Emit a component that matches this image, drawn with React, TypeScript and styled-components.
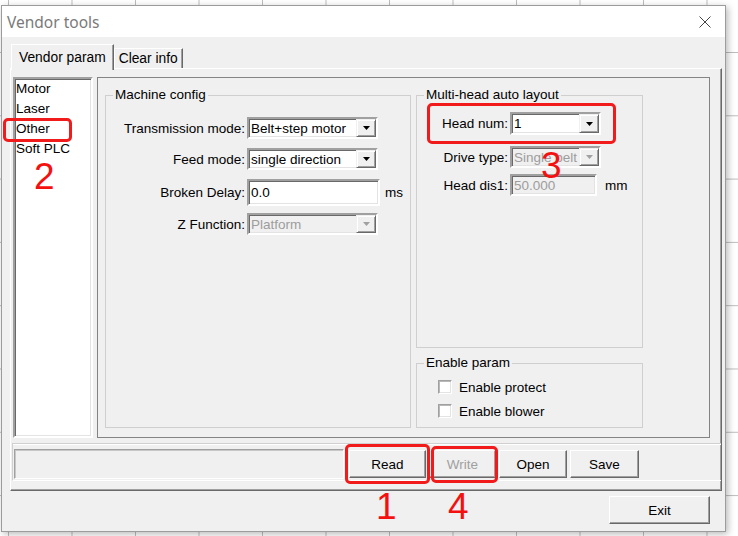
import styled, { createGlobalStyle } from 'styled-components';

const GlobalStyle = createGlobalStyle`
  html, body {
    margin: 0;
    padding: 0;
  }
  body {
    width: 738px;
    height: 536px;
    overflow: hidden;
    background-color: #fff;
    background-image: linear-gradient(to right, #bdbdbd 1px, transparent 1px),
      linear-gradient(to bottom, #bdbdbd 1px, transparent 1px);
    background-size: 63.5px 100%, 100% 63.3px;
    background-position: 8px 0, 0 52px;
    font-family: 'Liberation Sans', Arial, sans-serif;
    font-size: 13.5px;
    color: #000;
  }
`;

const Page = styled.div`
  padding: 5px 0 0 1px;
`;

const Window = styled.div`
  position: relative;
  box-sizing: border-box;
  width: 725px;
  height: 527px;
  border: 1px solid #9c9c9c;
  background: #f0f0f0;
  box-shadow: 2px 2px 7px rgba(0, 0, 0, 0.28);
  display: flex;
  flex-direction: column;
`;

const TitleBar = styled.div`
  height: 31px;
  flex: none;
  background: #fff;
  display: flex;
  align-items: center;
  justify-content: space-between;
  padding: 0 14px 0 5px;
`;

const Title = styled.span`
  font-family: 'Noto Sans', 'Liberation Sans', sans-serif;
  font-size: 15.5px;
  color: #7a7a7a;
`;

const Body = styled.div`
  flex: 1;
  padding: 7px 0 0 8px;
  display: flex;
  flex-direction: column;
`;

const TabStrip = styled.div`
  height: 24px;
  display: flex;
  align-items: flex-end;
  padding-left: 1px;
`;

const Tab = styled.div<{ $active?: boolean }>`
  position: relative;
  z-index: ${(p) => (p.$active ? 1 : 0)};
  box-sizing: border-box;
  height: ${(p) => (p.$active ? 26 : 20)}px;
  margin-bottom: ${(p) => (p.$active ? -2 : 0)}px;
  padding: 0 ${(p) => (p.$active ? 7 : 4)}px;
  display: flex;
  align-items: center;
  background: #f0f0f0;
  border-top: 1px solid #fff;
  border-left: 1px solid #fff;
  border-right: 1px solid #696969;
  box-shadow: inset -1px 0 0 #a0a0a0;
  font-size: 13.8px;
`;

const Panel = styled.div`
  box-sizing: border-box;
  width: 712px;
  height: 423px;
  border-top: 1px solid #fff;
  border-left: 1px solid #fff;
  border-right: 1px solid #696969;
  border-bottom: 1px solid #696969;
  box-shadow: inset -1px -1px 0 #a0a0a0;
  padding: 8px 0 9px 1px;
  display: flex;
  flex-direction: column;
  gap: 5px;
`;

const MainRow = styled.div`
  height: 361px;
  display: flex;
  gap: 4px;
  padding: 0 11px 0 1px;
`;

const ListBox = styled.div`
  box-sizing: border-box;
  width: 80px;
  background: #fff;
  border: 2px solid;
  border-color: #a0a0a0 #fff #fff #a0a0a0;
  box-shadow: inset 1px 1px 0 #696969, inset -1px -1px 0 #e3e3e3;
  padding: 0 0 0 1px;
`;

const ListItem = styled.div`
  line-height: 20px;
  white-space: nowrap;
`;

const Frame = styled.div`
  flex: 1;
  box-sizing: border-box;
  border: 1px solid #838383;
  padding: 9px 0 9px 7px;
  display: flex;
  gap: 5px;
`;

const Group = styled.fieldset<{ $width?: number; $height?: number; $grow?: boolean }>`
  box-sizing: border-box;
  margin: 0;
  padding: 0;
  min-width: 0;
  border: 1px solid #cfcfcf;
  width: ${(p) => (p.$width ? `${p.$width}px` : 'auto')};
  height: ${(p) => (p.$height ? `${p.$height}px` : 'auto')};
  flex: ${(p) => (p.$grow ? '1' : 'none')};
`;

const Legend = styled.legend`
  margin-left: 7px;
  padding: 0 2px;
  line-height: 16px;
`;

const Column = styled.div`
  flex: none;
  width: 227px;
  display: flex;
  flex-direction: column;
  gap: 7px;
`;

const FieldRow = styled.div<{ $top: number }>`
  display: flex;
  align-items: center;
  margin-top: ${(p) => p.$top}px;
`;

const Label = styled.span<{ $width: number }>`
  width: ${(p) => p.$width}px;
  margin-right: 2px;
  text-align: right;
  white-space: nowrap;
`;

const Sunken = styled.div<{ $width: number; $height: number; $disabled?: boolean }>`
  box-sizing: border-box;
  width: ${(p) => p.$width}px;
  height: ${(p) => p.$height}px;
  border: 2px solid;
  border-color: #a0a0a0 #fff #fff #a0a0a0;
  box-shadow: inset 1px 1px 0 #696969, inset -1px -1px 0 #e3e3e3;
  background: ${(p) => (p.$disabled ? '#f0f0f0' : '#fff')};
  color: ${(p) => (p.$disabled ? '#9d9d9d' : '#000')};
  display: flex;
  align-items: center;
  padding-left: 2px;
  white-space: nowrap;
  overflow: hidden;
`;

const ComboText = styled.span`
  flex: 1;
  overflow: hidden;
`;

const DropButton = styled.span`
  box-sizing: border-box;
  flex: none;
  width: 20px;
  height: 100%;
  background: #f0f0f0;
  border: 1px solid;
  border-color: #f0f0f0 #696969 #696969 #f0f0f0;
  box-shadow: inset 1px 1px 0 #fff, inset -1px -1px 0 #a0a0a0;
  display: flex;
  align-items: center;
  justify-content: center;
`;

const Unit = styled.span<{ $gap: number }>`
  margin-left: ${(p) => p.$gap}px;
`;

const CheckRow = styled.div<{ $top: number }>`
  display: flex;
  align-items: center;
  height: 20px;
  margin-top: ${(p) => p.$top}px;
  padding-left: 21px;
`;

const CheckBox = styled.span`
  box-sizing: border-box;
  width: 14px;
  height: 14px;
  background: #fff;
  border: 1px solid;
  border-color: #a0a0a0 #fff #fff #a0a0a0;
  box-shadow: inset 1px 1px 0 #b8b8b8, inset -1px -1px 0 #e3e3e3;
  margin-right: 7px;
`;

const BottomBar = styled.div`
  box-sizing: border-box;
  height: 38px;
  border-top: 1px solid #d0d0d0;
  border-left: 1px solid #d0d0d0;
  border-bottom: 1px solid #fff;
  box-shadow: inset 0 1px 0 #fff;
  padding: 4px 0 0 1px;
  display: flex;
  align-items: center;
  gap: 3px;
`;

const StatusField = styled.div`
  box-sizing: border-box;
  width: 330px;
  height: 30px;
  margin-right: 2px;
  border: 1px solid;
  border-color: #a0a0a0 #fff #fff #a0a0a0;
  box-shadow: inset 1px 1px 0 #c8c8c8;
`;

const Button = styled.div<{ $width: number; $disabled?: boolean }>`
  box-sizing: border-box;
  width: ${(p) => p.$width}px;
  height: 28px;
  background: #f0f0f0;
  border: 1px solid;
  border-color: #fff #696969 #696969 #fff;
  box-shadow: inset -1px -1px 0 #a0a0a0;
  color: ${(p) => (p.$disabled ? '#a0a0a0' : '#000')};
  display: flex;
  align-items: center;
  justify-content: center;
`;

const ExitRow = styled.div`
  margin-top: 5px;
  display: flex;
  justify-content: flex-end;
  padding-right: 15px;
`;

const Mark = styled.div<{ $x: number; $y: number; $w: number; $h: number }>`
  position: absolute;
  left: ${(p) => p.$x}px;
  top: ${(p) => p.$y}px;
  width: ${(p) => p.$w}px;
  height: ${(p) => p.$h}px;
  box-sizing: border-box;
  border: 3px solid #f21b1b;
  border-radius: 5px;
  pointer-events: none;
`;

const StepNumber = styled.div<{ $x: number; $y: number }>`
  position: absolute;
  left: ${(p) => p.$x}px;
  top: ${(p) => p.$y}px;
  font-family: 'Liberation Sans', Arial, sans-serif;
  font-size: 37px;
  line-height: 1;
  color: #f51010;
`;

const Arrow = ({ disabled }: { disabled?: boolean }) => (
  <svg width="7" height="4" viewBox="0 0 7 4">
    <polygon points="0,0 7,0 3.5,4" fill={disabled ? '#a0a0a0' : '#000'} />
  </svg>
);

const Combo = ({ value, width, height = 22, disabled }: { value: string; width: number; height?: number; disabled?: boolean }) => (
  <Sunken $width={width} $height={height} $disabled={disabled}>
    <ComboText>{value}</ComboText>
    <DropButton>
      <Arrow disabled={disabled} />
    </DropButton>
  </Sunken>
);

export default function App() {
  return (
    <Page>
      <GlobalStyle />
      <Window>
        <TitleBar>
          <Title>Vendor tools</Title>
          <svg width="12" height="12" viewBox="0 0 12 12">
            <path d="M0.5 0.5L11.5 11.5M11.5 0.5L0.5 11.5" stroke="#444" strokeWidth="1" />
          </svg>
        </TitleBar>
        <Body>
          <TabStrip>
            <Tab $active>Vendor param</Tab>
            <Tab>Clear info</Tab>
          </TabStrip>
          <Panel>
            <MainRow>
              <ListBox>
                <ListItem>Motor</ListItem>
                <ListItem>Laser</ListItem>
                <ListItem>Other</ListItem>
                <ListItem>Soft PLC</ListItem>
              </ListBox>
              <Frame>
                <Group $width={306}>
                  <Legend>Machine config</Legend>
                  <FieldRow $top={14}>
                    <Label $width={139}>Transmission mode:</Label>
                    <Combo value="Belt+step motor" width={131} />
                  </FieldRow>
                  <FieldRow $top={9}>
                    <Label $width={139}>Feed mode:</Label>
                    <Combo value="single direction" width={131} />
                  </FieldRow>
                  <FieldRow $top={9}>
                    <Label $width={139}>Broken Delay:</Label>
                    <Sunken $width={133} $height={27}>0.0</Sunken>
                    <Unit $gap={5}>ms</Unit>
                  </FieldRow>
                  <FieldRow $top={7}>
                    <Label $width={139}>Z Function:</Label>
                    <Combo value="Platform" width={131} disabled />
                  </FieldRow>
                </Group>
                <Column>
                  <Group $grow>
                    <Legend>Multi-head auto layout</Legend>
                    <FieldRow $top={9}>
                      <Label $width={91}>Head num:</Label>
                      <Combo value="1" width={91} height={23} />
                    </FieldRow>
                    <FieldRow $top={11}>
                      <Label $width={91}>Drive type:</Label>
                      <Combo value="Single belt" width={91} disabled />
                    </FieldRow>
                    <FieldRow $top={6}>
                      <Label $width={91}>Head dis1:</Label>
                      <Sunken $width={87} $height={22} $disabled>50.000</Sunken>
                      <Unit $gap={8}>mm</Unit>
                    </FieldRow>
                  </Group>
                  <Group $height={73}>
                    <Legend>Enable param</Legend>
                    <CheckRow $top={6}>
                      <CheckBox />
                      Enable protect
                    </CheckRow>
                    <CheckRow $top={4}>
                      <CheckBox />
                      Enable blower
                    </CheckRow>
                  </Group>
                </Column>
              </Frame>
            </MainRow>
            <BottomBar>
              <StatusField />
              <Button $width={77}>Read</Button>
              <Button $width={67} $disabled>Write</Button>
              <Button $width={68}>Open</Button>
              <Button $width={69}>Save</Button>
            </BottomBar>
          </Panel>
          <ExitRow>
            <Button $width={101}>Exit</Button>
          </ExitRow>
        </Body>

        <Mark $x={1} $y={112} $w={69} $h={24} />
        <Mark $x={425} $y={97} $w={189} $h={41} />
        <Mark $x={343} $y={438} $w={85} $h={40} />
        <Mark $x={429} $y={440} $w={67} $h={37} />
        <StepNumber $x={32} $y={152}>2</StepNumber>
        <StepNumber $x={539} $y={141}>3</StepNumber>
        <StepNumber $x={374} $y={482}>1</StepNumber>
        <StepNumber $x={446} $y={482}>4</StepNumber>
      </Window>
    </Page>
  );
}
